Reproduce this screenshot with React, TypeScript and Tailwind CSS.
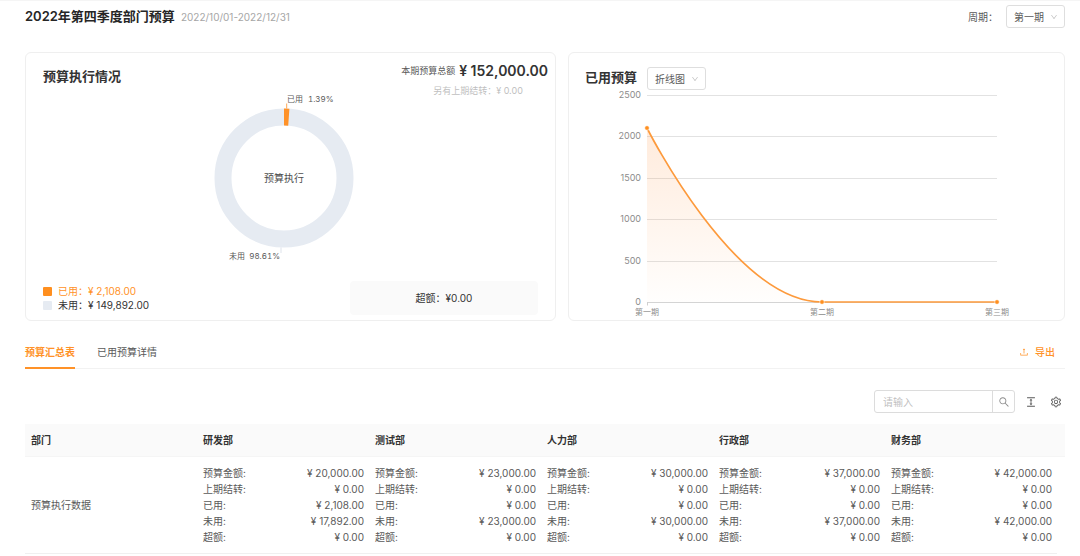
import { useState } from "react";
import {
  AiOutlineColumnHeight,
  AiOutlineDown,
  AiOutlineSearch,
  AiOutlineSetting,
  AiOutlineUpload,
} from "react-icons/ai";

type Department = {
  name: string;
  budget: string;
  used: string;
  left: string;
};

const departments: Department[] = [
  { name: "研发部", budget: "20,000.00", used: "2,108.00", left: "17,892.00" },
  { name: "测试部", budget: "23,000.00", used: "0.00", left: "23,000.00" },
  { name: "人力部", budget: "30,000.00", used: "0.00", left: "30,000.00" },
  { name: "行政部", budget: "37,000.00", used: "0.00", left: "37,000.00" },
  { name: "财务部", budget: "42,000.00", used: "0.00", left: "42,000.00" },
];

const tabs = ["预算汇总表", "已用预算详情"];

function Select({ id, label, options }: { id: string; label?: string; options: string[] }) {
  return (
    <span className="relative inline-flex">
      <select
        id={id}
        aria-label={label}
        className="h-[23px] w-[59px] appearance-none rounded-[3px] border border-[#dedede] bg-white pl-[7px] text-[10px] leading-4 text-[#595959] outline-none"
      >
        {options.map((option) => (
          <option key={option}>{option}</option>
        ))}
      </select>
      <AiOutlineDown className="pointer-events-none absolute top-2 right-[7px] size-2 text-[#bfbfbf]" />
    </span>
  );
}

function DonutChart() {
  return (
    <svg viewBox="0 0 200 170" className="h-[170px] w-[200px] tabular-nums" role="img" aria-label="预算执行">
      <circle cx="100" cy="85" r="61" fill="none" stroke="#e6ebf2" strokeWidth="17" />
      <path d="M100 15.5 A69.5 69.5 0 0 1 105.4 15.7 L104.2 32.7 A52.5 52.5 0 0 0 100 32.5Z" fill="#ff9228" />
      <path d="M102.7 15.5V10.5" stroke="#ff9228" strokeWidth="0.8" />
      <path d="M97 154.5V160" stroke="#d5dce6" strokeWidth="0.8" />
      <g fontSize="8" fill="#595959">
        <text x="103" y="9">已用</text>
        <text x="124" y="9">1.39%</text>
        <text x="45" y="166">未用</text>
        <text x="96" y="166" textAnchor="end">98.61%</text>
      </g>
      <text x="100" y="89" fontSize="10" fill="#4d4d4d" textAnchor="middle">预算执行</text>
    </svg>
  );
}

const ticks = [
  { label: "2500", y: 5 },
  { label: "2000", y: 46 },
  { label: "1500", y: 88 },
  { label: "1000", y: 129 },
  { label: "500", y: 171 },
  { label: "0", y: 212 },
];

const points = [
  { label: "第一期", x: 78, y: 38 },
  { label: "第二期", x: 253, y: 212 },
  { label: "第三期", x: 428, y: 212 },
];

function LineChart() {
  return (
    <svg viewBox="0 0 495 230" className="w-full" role="img" aria-label="已用预算">
      <defs>
        <linearGradient id="area" x1="0" y1="0" x2="0" y2="1">
          <stop offset="0" stopColor="#ff8f3a" stopOpacity="0.18" />
          <stop offset="1" stopColor="#ff8f3a" stopOpacity="0.01" />
        </linearGradient>
      </defs>
      {ticks.map((tick) => (
        <g key={tick.label}>
          <path d={`M78 ${tick.y}.5H428`} stroke={tick.label === "0" ? "#d4d4d4" : "#e2e2e2"} />
          <text x="72" y={tick.y + 3} fontSize="9" fill="#8c8c8c" textAnchor="end">{tick.label}</text>
        </g>
      ))}
      <path d="M78.5 212V215.5" stroke="#cfcfcf" />
      <path d="M78 38C78 38 165 212 253 212H78Z" fill="url(#area)" />
      <path d="M78 38C78 38 165 212 253 212H428" fill="none" stroke="#fd9a3c" strokeWidth="1.7" />
      {points.map((point) => (
        <g key={point.label}>
          <circle cx={point.x} cy={point.y} r="2.3" fill="#ff8f1f" stroke="#fff" strokeWidth="0.6" />
          <text x={point.x} y="225" fontSize="8" fill="#8c8c8c" textAnchor="middle">{point.label}</text>
        </g>
      ))}
    </svg>
  );
}

function Amounts({ department }: { department: Department }) {
  const rows = [
    ["预算金额:", department.budget],
    ["上期结转:", "0.00"],
    ["已用:", department.used],
    ["未用:", department.left],
    ["超额:", "0.00"],
  ];
  return (
    <dl>
      {rows.map(([name, value]) => (
        <div key={name} className="flex justify-between">
          <dt>{name}</dt>
          <dd>¥ {value}</dd>
        </div>
      ))}
    </dl>
  );
}

export default function App() {
  const [active, setActive] = useState(tabs[0]);

  return (
    <main className="border-t border-[#f5f5f5] bg-white pr-[15px] pl-[25px] font-['Inter','Noto_Sans_CJK_SC',sans-serif] text-[10px] leading-4 text-[#595959]">
      <header className="flex items-center justify-between pt-1">
        <div className="flex items-baseline gap-1.5 pb-0.5">
          <h1 className="text-[13px] leading-5 font-semibold text-[#262626]">2022年第四季度部门预算</h1>
          <span className="text-[#a6a6a6]">2022/10/01-2022/12/31</span>
        </div>
        <div className="flex items-center gap-2">
          <label htmlFor="period">周期：</label>
          <Select id="period" options={["第一期", "第二期", "第三期"]} />
        </div>
      </header>

      <div className="mt-6 grid grid-cols-[531fr_497fr] gap-3">
        <section className="flex flex-col rounded-md border border-[#efefef]">
          <div className="flex items-start justify-between pt-2 pr-[7px] pl-[17px]">
            <h2 className="pt-[5px] text-[13px] leading-5 font-semibold text-[#333333]">预算执行情况</h2>
            <div>
              <p className="flex items-center gap-1 text-[9px] leading-5">
                本期预算总额
                <strong className="text-[14px] font-semibold text-[#333333]">¥ 152,000.00</strong>
              </p>
              <p className="pl-8 text-[9px] leading-5 text-[#bfbfbf]">另有上期结转：¥ 0.00</p>
            </div>
          </div>
          <div className="-mt-2 flex justify-center pr-3.5">
            <DonutChart />
          </div>
          <div className="mt-auto flex items-center justify-between pr-[17px] pb-[5px] pl-[17px]">
            <ul className="leading-[14px] text-[#333333]">
              <li className="flex items-center gap-1.5 text-[#ff9228]">
                <i className="size-[9px] rounded-[1px] bg-[#ff8f1f]" />
                已用：¥ 2,108.00
              </li>
              <li className="flex items-center gap-1.5">
                <i className="size-[9px] rounded-[1px] bg-[#e6ebf2]" />
                未用：¥ 149,892.00
              </li>
            </ul>
            <p className="w-[188px] rounded-sm bg-[#fafafa] py-[9px] text-center text-[#333333]">超额：¥0.00</p>
          </div>
        </section>

        <section className="rounded-md border border-[#efefef]">
          <div className="flex items-start gap-2.5 pt-3.5 pl-4">
            <h2 className="text-[13px] leading-5 font-semibold text-[#333333]">已用预算</h2>
            <Select id="chart-type" label="图表类型" options={["折线图", "柱状图"]} />
          </div>
          <LineChart />
        </section>
      </div>

      <div className="mt-[15px] flex items-center justify-between border-b border-[#f2f2f2]">
        <div role="tablist" className="flex gap-[22px]">
          {tabs.map((tab) => (
            <button
              key={tab}
              type="button"
              role="tab"
              aria-selected={active === tab}
              onClick={() => setActive(tab)}
              className={
                active === tab
                  ? "-mb-px border-b-2 border-[#ff9228] pt-2 pb-[7px] font-semibold text-[#ff9228]"
                  : "-mb-px border-b-2 border-transparent pt-2 pb-[7px]"
              }
            >
              {tab}
            </button>
          ))}
        </div>
        <button type="button" className="mr-2.5 flex items-center gap-1.5 font-medium text-[#ff9228]">
          <AiOutlineUpload className="size-2.5" />
          导出
        </button>
      </div>

      <div className="mt-[21px] flex items-center justify-end pr-[3px]">
        <div className="flex h-[23px] w-[141px] rounded-[3px] border border-[#dcdcdc]">
          <input
            type="search"
            aria-label="搜索"
            placeholder="请输入"
            className="min-w-0 flex-1 px-2 outline-none placeholder:text-[#bfbfbf]"
          />
          <button
            type="button"
            aria-label="查询"
            className="flex w-[22px] items-center justify-center border-l border-[#dcdcdc] text-[#8c8c8c]"
          >
            <AiOutlineSearch className="size-3" />
          </button>
        </div>
        <button type="button" aria-label="密度" className="ml-2.5 text-[#595959]">
          <AiOutlineColumnHeight className="size-3" />
        </button>
        <button type="button" aria-label="列设置" className="ml-[13px] text-[#595959]">
          <AiOutlineSetting className="size-3" />
        </button>
      </div>

      <table className="mt-[11px] w-full table-fixed border-collapse text-left">
        <thead className="bg-[#fafafa] text-[#333333]">
          <tr>
            {["部门", ...departments.map((department) => department.name)].map((name) => (
              <th key={name} scope="col" className="border-b border-[#f5f5f5] px-1.5 py-2 font-semibold">
                {name}
              </th>
            ))}
            <td className="w-2 border-b border-[#f5f5f5]" />
          </tr>
        </thead>
        <tbody>
          <tr>
            <th scope="row" className="border-b border-[#f0f0f0] px-1.5 font-normal">预算执行数据</th>
            {departments.map((department) => (
              <td key={department.name} className="border-b border-[#f0f0f0] py-2 pr-[5px] pl-1.5">
                <Amounts department={department} />
              </td>
            ))}
          </tr>
        </tbody>
      </table>
    </main>
  );
}
